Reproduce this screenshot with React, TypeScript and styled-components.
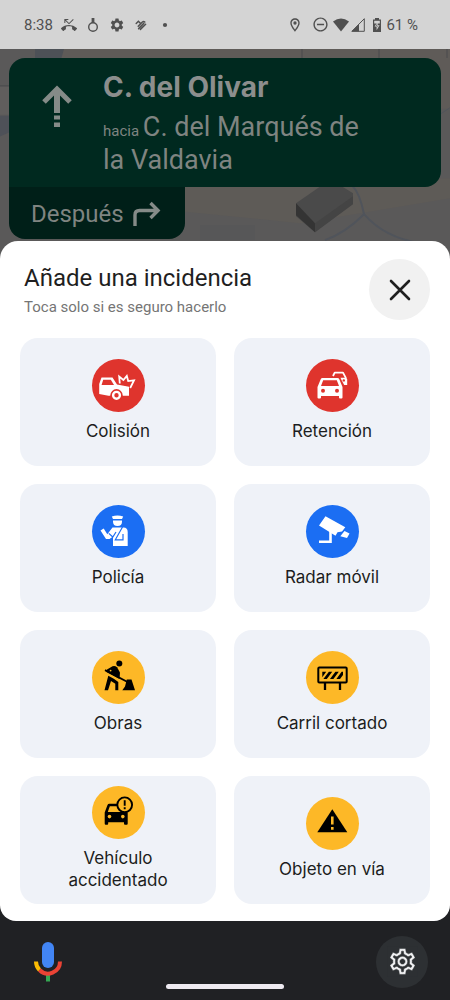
import React from "react";
import styled, { createGlobalStyle } from "styled-components";
import {
  MdOutlineLocationOn,
  MdOutlineSettings,
  MdPhoneMissed,
  MdRemoveCircleOutline,
  MdSettings,
} from "react-icons/md";

const GlobalStyle = createGlobalStyle`
  * { box-sizing: border-box; }
  body { margin: 0; background: #202124; font-family: Inter, "Liberation Sans", sans-serif; }
  button { border: 0; padding: 0; font: inherit; color: inherit; cursor: pointer; }
  h1, h2, p { margin: 0; font-weight: 400; }
  svg { display: block; }
`;

const Screen = styled.div`
  display: flex;
  flex-direction: column;
  min-height: 100vh;
`;

const StatusBar = styled.header`
  display: flex;
  justify-content: space-between;
  align-items: center;
  height: 49px;
  padding: 0 32px 0 24px;
  background: #d4d4d4;
  color: #505050;
  font-family: Roboto, sans-serif;
  font-size: 15px;
`;

const StatusGroup = styled.div<{ $gap: number }>`
  display: flex;
  align-items: center;
  gap: ${(p) => p.$gap}px;
`;

const MapArea = styled.section`
  position: relative;
  padding: 9px 9px 20px;
  background: #5a5959;
`;

const MapDrawing = styled.svg`
  position: absolute;
  inset: 0;
  width: 100%;
  height: 100%;
`;

const Directions = styled.div`
  position: relative;
  display: flex;
  flex-direction: column;
  align-items: flex-start;
  color: #7f8481;
  font-family: Roboto, sans-serif;
`;

const Maneuver = styled.div`
  display: flex;
  align-self: stretch;
  gap: 30px;
  padding: 12px 32px 10px;
  border-radius: 16px 16px 16px 0;
  background: #00291f;
`;

const ArrowSlot = styled.div`
  width: 32px;
  flex: none;
  padding-top: 14px;
`;

const Street = styled.h2`
  font-family: Inter, sans-serif;
  font-size: 28px;
  line-height: 34px;
  font-weight: 700;
  color: #8c8e8d;
`;

const Toward = styled.p`
  padding-top: 7px;
  font-size: 27px;
  line-height: 33px;
  max-width: 270px;
`;

const Small = styled.span`
  font-size: 15px;
  line-height: 1;
`;

const NextStep = styled.div`
  display: flex;
  align-items: center;
  gap: 9px;
  height: 52px;
  padding: 2px 24px 0 22px;
  border-radius: 0 0 16px 16px;
  background: #001f18;
  font-size: 24px;
`;

const Sheet = styled.main`
  position: relative;
  margin-top: -18px;
  padding: 18px 20px 17px;
  border-radius: 18px 18px 16px 16px;
  background: #fff;
`;

const SheetHeader = styled.div`
  display: flex;
  justify-content: space-between;
  align-items: center;
  padding-left: 4px;
  margin-bottom: 18px;
`;

const Heading = styled.div`
  padding-top: 2px;
`;

const Title = styled.h1`
  font-family: Roboto, sans-serif;
  font-size: 24px;
  line-height: 32px;
  color: #1f1f1f;
`;

const Subtitle = styled.p`
  font-family: Roboto, sans-serif;
  font-size: 15px;
  line-height: 26px;
  color: #757575;
`;

const RoundButton = styled.button<{ $size: number; $bg: string }>`
  display: grid;
  place-items: center;
  flex: none;
  width: ${(p) => p.$size}px;
  height: ${(p) => p.$size}px;
  border-radius: 50%;
  background: ${(p) => p.$bg};
`;

const Grid = styled.div`
  display: grid;
  grid-template-columns: 1fr 1fr;
  gap: 18px;
`;

const Tile = styled.button`
  display: flex;
  flex-direction: column;
  align-items: center;
  justify-content: center;
  gap: 8px;
  min-height: 128px;
  padding: 0 32px 4px;
  border-radius: 18px;
  background: #eff2f8;
  color: #1c1d20;
  font-size: 17px;
  line-height: 22px;
`;

const Disc = styled.span<{ $bg: string }>`
  width: 53px;
  height: 53px;
  border-radius: 50%;
  background: ${(p) => p.$bg};
`;

const BottomBar = styled.footer`
  display: grid;
  grid-template-columns: 1fr auto 1fr;
  align-items: center;
  flex: 1;
  min-height: 79px;
  padding: 13px 22px 11px 32px;
  background: #202124;
`;

const MicButton = styled.button`
  justify-self: start;
  background: none;
`;

const HomeHandle = styled.div`
  align-self: end;
  width: 118px;
  height: 5px;
  margin-left: -10px;
  border-radius: 3px;
  background: #eeeaf1;
`;

const EndSlot = styled.div`
  justify-self: end;
`;

const RED = "#df342d";
const BLUE = "#1b6ef3";
const AMBER = "#fdb827";

const Glyph = ({ children }: { children: React.ReactNode }) => (
  <svg width="53" height="53" viewBox="0 0 53 53" aria-hidden="true">
    {children}
  </svg>
);

const Collision = () => (
  <Glyph>
    <path d="M9.5 18.5H20.5L25 25.5L37 27.8V36.8H16.5L7.2 35V25Z" fill="#fff" />
    <path d="M11.2 20.8H18.8L22 26H9.6Z" fill={RED} />
    <circle cx="24.5" cy="36.3" r="6.2" fill={RED} />
    <circle cx="24.5" cy="36.3" r="3.4" fill="none" stroke="#fff" strokeWidth="2.4" />
    <path d="M27.8 24.5L27.2 17.6L31.4 21L34.8 17L36.2 22.1L42 21.3L38.2 29" fill="none" stroke="#fff" strokeWidth="1.8" />
  </Glyph>
);

const Traffic = () => (
  <Glyph>
    <path d="M27 17L28.7 13.6H37L39.7 18.6V25.5" fill="none" stroke="#fff" strokeWidth="1.8" strokeLinejoin="round" />
    <path d="M34.5 18.8H39.8L41.2 20.5V26H38.2L35 20Z" fill="#fff" />
    <circle cx="37.8" cy="21.4" r="1.2" fill={RED} />
    <path d="M16.5 19H31.5Q32.8 19 33.3 20.3L36.5 28V38.5Q36.5 39.5 35.5 39.5H34Q33 39.5 33 38.5V37H15V38.5Q15 39.5 14 39.5H12.5Q11.5 39.5 11.5 38.5V28L14.7 20.3Q15.2 19 16.5 19Z" fill="#fff" />
    <path d="M17.2 21.3H30.8L33 27H15Z" fill={RED} />
    <circle cx="17" cy="31.7" r="2" fill={RED} />
    <circle cx="31" cy="31.7" r="2" fill={RED} />
  </Glyph>
);

const Police = () => (
  <Glyph>
    <path d="M19.8 11.5Q25.5 9.3 31.2 11.5L30 14H21Z" fill="#fff" />
    <path d="M21 15.4H30V16.5Q30 21 25.5 21Q21 21 21 16.5Z" fill="#fff" />
    <path d="M20.5 22.5H31.5Q35.7 22.5 35.7 27V41H21V31.5L17.5 34H14L8.5 25.5L11.7 23.5L15.3 29.2Z" fill="#fff" />
    <path d="M30.5 22L23.3 34.8H31V29M16.8 28.4L20.8 32L24 27" fill="none" stroke={BLUE} strokeWidth="1.2" />
  </Glyph>
);

const Camera = () => (
  <Glyph>
    <path d="M19.5 11.2L39.3 22.2L36 26.5L31.5 27.2L29.5 30.8L13 20.5Z" fill="#fff" />
    <path d="M38.5 26L43.5 28.5L41 33L34.3 31.3Z" fill="#fff" />
    <path d="M24.5 25V36.8H13" fill="none" stroke="#fff" strokeWidth="2.6" />
  </Glyph>
);

const Roadworks = () => (
  <Glyph>
    <circle cx="27.3" cy="12.4" r="3" />
    <path d="M15 18.5L20.5 15.3Q23 14.5 25 16.2L28 21.5L27.5 28L14.5 21Z" />
    <circle cx="18.6" cy="19.6" r="0.9" fill={AMBER} />
    <path d="M13 19.2L36.5 31.5" stroke="#000" strokeWidth="1.9" />
    <path d="M15 23.4L27 30" stroke={AMBER} strokeWidth="1" />
    <path d="M16.3 24.8L21.8 27.8L26.3 31V39.3H23.3V32.8L19 30L16 39.3H12.5Z" />
    <path d="M34.8 28.5H39.5L43 39.3H30.3L33 35.5Z" />
  </Glyph>
);

const Barrier = () => (
  <Glyph>
    <rect x="12.3" y="16.6" width="28.4" height="15" rx="1" fill="none" stroke="#000" strokeWidth="2" />
    <path d="M16.3 20.7H20.2L16.3 26.2ZM22.9 20.7H26.2L20.8 28H17.4ZM29.4 20.7H32.8L27.4 28H24ZM35.6 20.7H37V24L34 28H30.4Z" />
    <path d="M19 32V39M34 32V39" stroke="#000" strokeWidth="2.3" />
  </Glyph>
);

const BrokenCar = () => (
  <Glyph>
    <path d="M17.2 17.8H31L35.7 27V37.5Q35.7 38.7 34.7 38.7H33Q32 38.7 32 37.5V36.2H16.2V37.5Q16.2 38.7 15.2 38.7H13.7Q12.7 38.7 12.7 37.5V26.5L15.5 19Q16 17.8 17.2 17.8Z" />
    <path d="M17.8 20.2H31L33 26H15.8Z" fill={AMBER} />
    <circle cx="17.5" cy="30.6" r="1.8" fill={AMBER} />
    <circle cx="30.8" cy="30.6" r="1.8" fill={AMBER} />
    <circle cx="32.7" cy="18.8" r="7.4" fill={AMBER} stroke="#000" strokeWidth="1.9" />
    <path d="M32.7 14.3V19.8M32.7 21.3V23.3" stroke="#000" strokeWidth="1.9" />
  </Glyph>
);

const Hazard = () => (
  <Glyph>
    <path d="M26.3 12.3L41.3 35.3H11.3Z" />
    <path d="M26.3 19.5V27.5M26.3 30V32.7" stroke={AMBER} strokeWidth="2.6" />
  </Glyph>
);

const incidents = [
  { label: "Colisión", color: RED, icon: <Collision /> },
  { label: "Retención", color: RED, icon: <Traffic /> },
  { label: "Policía", color: BLUE, icon: <Police /> },
  { label: "Radar móvil", color: BLUE, icon: <Camera /> },
  { label: "Obras", color: AMBER, icon: <Roadworks /> },
  { label: "Carril cortado", color: AMBER, icon: <Barrier /> },
  { label: "Vehículo accidentado", color: AMBER, icon: <BrokenCar /> },
  { label: "Objeto en vía", color: AMBER, icon: <Hazard /> },
];

export default function App() {
  return (
    <Screen>
      <GlobalStyle />
      <StatusBar>
        <StatusGroup $gap={8}>
          <span>8:38</span>
          <MdPhoneMissed size={16} />
          <svg width="16" height="16" viewBox="0 0 16 16" fill="none" stroke="#505050">
            <circle cx="8" cy="10" r="4.3" strokeWidth="1.4" />
            <path d="M8 1V6" strokeWidth="2.8" />
          </svg>
          <MdSettings size={16} />
          <svg width="16" height="16" viewBox="0 0 16 16" fill="none" stroke="#505050" strokeWidth="1.5" strokeLinecap="round">
            <path d="M3.2 6.5L5.4 4.3L7.4 6.2M5.2 9.2L9.4 5Q10.6 3.9 11.8 5M7.4 12.4L12.6 7.2M5.6 11.6L10.8 6.4" />
          </svg>
          <svg width="16" height="16" viewBox="0 0 16 16">
            <circle cx="8" cy="8" r="2.1" fill="#505050" />
          </svg>
        </StatusGroup>
        <StatusGroup $gap={4}>
          <StatusGroup $gap={9}>
            <MdOutlineLocationOn size={16} />
            <MdRemoveCircleOutline size={17} />
          </StatusGroup>
          <StatusGroup $gap={2}>
            <svg width="16" height="14" viewBox="0 0 16 14" fill="#505050">
              <path d="M0 3.6Q8-2.6 16 3.6L8 13.6Z" />
            </svg>
            <svg width="14" height="14" viewBox="0 0 14 14" fill="#505050">
              <path d="M13.3 0.7V13.3H0.9Z" fill="none" stroke="#505050" />
              <path d="M8 6V13.5H0.5Z" />
            </svg>
          </StatusGroup>
          <StatusGroup $gap={1}>
            <svg width="16" height="16" viewBox="0 0 16 16" fill="#505050">
              <path d="M6 1H10V2.5H12V15H4V2.5H6Z" />
              <path d="M5.2 3.8H10.8V6.5H5.2Z" fill="#d4d4d4" />
              <path d="M8.8 4.5L5.6 9.6H7.6V13.2L10.6 8.2H8.8Z" fill="#d4d4d4" />
              <path d="M8.3 6.5L6.9 8.8H8.5V10.4L9.3 9H8Z" />
            </svg>
            <span>61 %</span>
          </StatusGroup>
        </StatusGroup>
      </StatusBar>

      <MapArea>
        <MapDrawing viewBox="0 0 450 211" preserveAspectRatio="none" aria-hidden="true">
          <rect width="450" height="211" fill="#5a5959" />
          <path d="M60 0H450V60H60Z" fill="#5f5b58" />
          <path d="M35 0H64L60 14H35Z" fill="#4d5157" />
          <path d="M150 130H450V150L300 175L150 160Z" fill="#5e5b57" />
          <path d="M0 38H9V66H0Z" fill="#605e5d" />
          <path d="M0 67H9V84L0 88Z" fill="#4e5158" />
          <path d="M302 0V9M379 0V9M447 0V9M0 37H9" stroke="#4a4b4d" fill="none" />
          <path d="M352 137Q360 145 364 166Q345 185 325 192M364 166Q385 190 420 195" stroke="#50545b" strokeWidth="2" fill="none" />
          <path d="M441 65L450 59" stroke="#50545b" fill="none" />
          <path d="M296 155L322 137H340L353 145V155L315 184L296 168Z" fill="#4a4a4a" />
          <path d="M296 155L315 175V184L296 167Z" fill="#343434" />
          <path d="M315 175L353 148V156L315 184Z" fill="#444444" />
          <path d="M200 177H255V192H200Z" fill="#575758" />
        </MapDrawing>
        <Directions>
          <Maneuver>
            <ArrowSlot>
              <svg width="32" height="44" viewBox="0 0 32 44" fill="none" stroke="#858b88" strokeWidth="6">
                <path d="M3 18L16 5L29 18" strokeWidth="5" />
                <path d="M16 6V29M16 31.5V35.5M16 38.5V43" />
              </svg>
            </ArrowSlot>
            <div>
              <Street>C. del Olivar</Street>
              <Toward>
                <Small>hacia </Small>C. del Marqués de la Valdavia
              </Toward>
            </div>
          </Maneuver>
          <NextStep>
            <span>Después</span>
            <svg width="28" height="26" viewBox="0 0 28 26" fill="none" stroke="#858b88" strokeWidth="3.4">
              <path d="M2 25V14Q2 9.5 6.5 9.5H25M17.5 2L25 9.5L17.5 17" />
            </svg>
          </NextStep>
        </Directions>
      </MapArea>

      <Sheet>
        <SheetHeader>
          <Heading>
            <Title>Añade una incidencia</Title>
            <Subtitle>Toca solo si es seguro hacerlo</Subtitle>
          </Heading>
          <RoundButton $size={61} $bg="#f1f1f1" aria-label="Cerrar">
            <svg width="22" height="22" viewBox="0 0 22 22" stroke="#1f1f1f" strokeWidth="2.6" strokeLinecap="round">
              <path d="M2 2L20 20M20 2L2 20" />
            </svg>
          </RoundButton>
        </SheetHeader>
        <Grid>
          {incidents.map((item) => (
            <Tile key={item.label}>
              <Disc $bg={item.color}>{item.icon}</Disc>
              <span>{item.label}</span>
            </Tile>
          ))}
        </Grid>
      </Sheet>

      <BottomBar>
        <MicButton aria-label="Micrófono">
          <svg width="32" height="42" viewBox="0 0 32 42" fill="none">
            <path d="M16 33V40.5" stroke="#34a853" strokeWidth="4" />
            <path d="M4 20.5A12 12 0 0 0 7.5 29" stroke="#fbbc04" strokeWidth="4" />
            <path d="M7.5 29A12 12 0 0 0 28 20.5" stroke="#ea4335" strokeWidth="4" />
            <rect x="10" y="1" width="12" height="26" rx="6" fill="#4285f4" />
          </svg>
        </MicButton>
        <HomeHandle />
        <EndSlot>
          <RoundButton $size={52} $bg="#2d3033" aria-label="Ajustes">
            <MdOutlineSettings size={31} color="#f1f1f3" stroke="#2d3033" strokeWidth="0.4" />
          </RoundButton>
        </EndSlot>
      </BottomBar>
    </Screen>
  );
}
